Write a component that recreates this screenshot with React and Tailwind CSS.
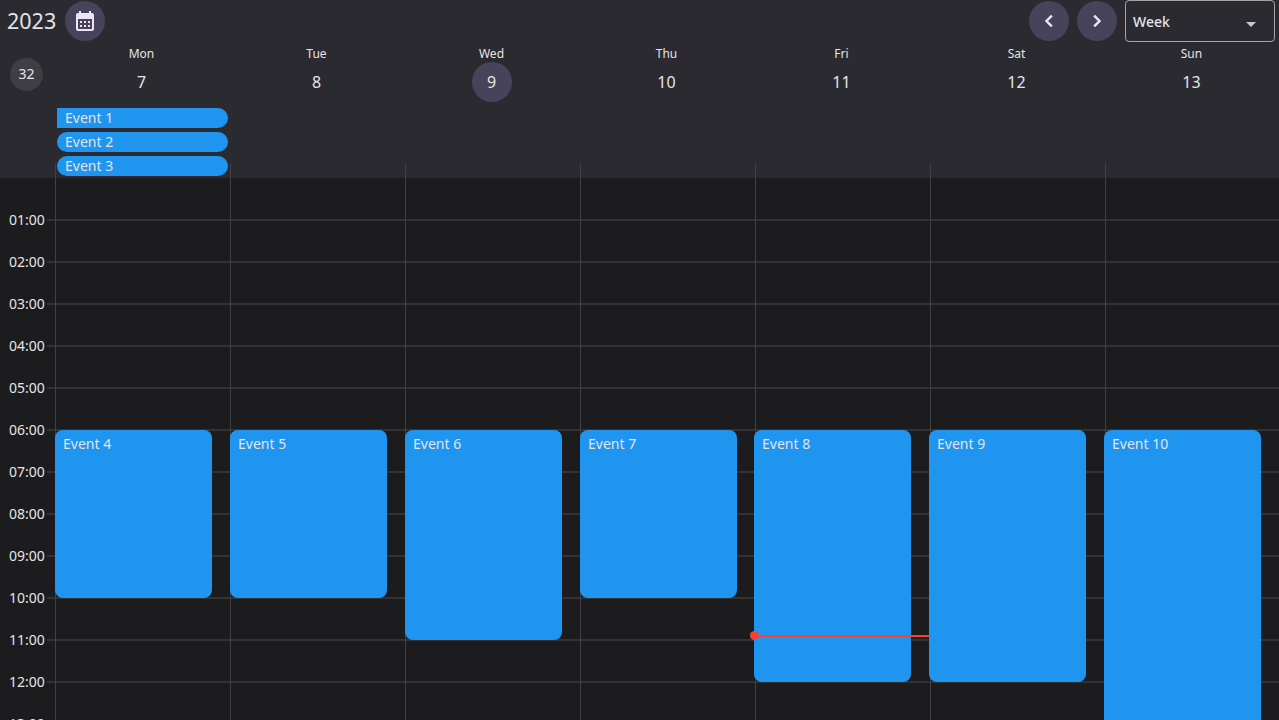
import { MdCalendarMonth, MdArrowDropDown } from "react-icons/md";

const days = [
  ["Mon", 7],
  ["Tue", 8],
  ["Wed", 9],
  ["Thu", 10],
  ["Fri", 11],
  ["Sat", 12],
  ["Sun", 13],
];

const hours = ["01:00", "02:00", "03:00", "04:00", "05:00", "06:00", "07:00", "08:00", "09:00", "10:00", "11:00", "12:00", "13:00"];

const events = [
  { name: "Event 4", h: "h-[168px]", left: "left-0" },
  { name: "Event 5", h: "h-[168px]", left: "left-0" },
  { name: "Event 6", h: "h-[210px]", left: "left-0" },
  { name: "Event 7", h: "h-[168px]", left: "left-0" },
  { name: "Event 8", h: "h-[252px]", left: "-left-px" },
  { name: "Event 9", h: "h-[252px]", left: "-left-px" },
  { name: "Event 10", h: "h-[336px]", left: "-left-px" },
];

function Chevron({ d }) {
  return (
    <svg width="24" height="24" viewBox="0 0 24 24" fill="currentColor" stroke="currentColor" strokeWidth="0.5" className="text-[#ece4f5]">
      <path d={d} />
    </svg>
  );
}

export default function App() {
  return (
    <div className="h-[720px] w-[1279px] overflow-hidden flex flex-col bg-[#1c1c1e] text-[#e4e4e7] font-['Noto_Sans',sans-serif]">
      {/* HEADER */}
      <div className="h-[178px] shrink-0 bg-[#2b2a31]">
        <div className="h-[42px] flex items-center pl-[7px] pr-1">
          <span className="w-[50px] text-[21.5px] leading-none">2023</span>
          <button className="ml-2 w-10 h-10 rounded-full bg-[#47435a] flex items-center justify-center">
            <MdCalendarMonth className="text-[#ece4f5]" size={24} />
          </button>
          <button className="ml-auto w-10 h-10 rounded-full bg-[#47435a] flex items-center justify-center">
            <Chevron d="M15.41 7.41 14 6l-6 6 6 6 1.41-1.41L10.83 12z" />
          </button>
          <button className="ml-2 w-10 h-10 rounded-full bg-[#47435a] flex items-center justify-center">
            <Chevron d="M10 6 8.59 7.41 13.17 12l-4.58 4.59L10 18l6-6z" />
          </button>
          <div className="ml-2 w-[150px] h-[42px] border border-[#a5a5a8] rounded-[4px] flex items-center justify-between pl-[7px] pr-[11px]">
            <span className="text-sm font-medium mt-px">Week</span>
            <MdArrowDropDown className="mt-1.5 text-[#c8c8cc]" size={24} />
          </div>
        </div>

        <div className="flex h-[60px]">
          <div className="w-[54px] shrink-0 flex items-center pl-2.5 pt-1">
            <span className="w-[33px] h-[33px] rounded-full bg-[#3f3e44] flex items-center justify-center text-sm">32</span>
          </div>
          <div className="flex-1 grid grid-cols-[repeat(7,175px)]">
            {days.map(([name, num]) => (
              <div key={name} className="flex flex-col items-center">
                <span className="text-xs leading-[24px]">{name}</span>
                <span
                  className={`w-10 h-10 -mt-1 rounded-full flex items-center justify-center text-base ${
                    num === 9 ? "bg-[#47435a]" : ""
                  }`}
                >
                  {num}
                </span>
              </div>
            ))}
          </div>
        </div>

        {/* ALL DAY EVENTS */}
        <div className="ml-[57px] w-[171px] mt-1.5 flex flex-col gap-1 relative z-10">
          <div className="h-5 bg-[#2095f0] rounded-r-[10px] pl-2 text-sm leading-5">Event 1</div>
          <div className="h-5 bg-[#2095f0] rounded-[10px] pl-2 text-sm leading-5">Event 2</div>
          <div className="h-5 bg-[#2095f0] rounded-[10px] pl-2 text-sm leading-5">Event 3</div>
        </div>
      </div>

      {/* GRID */}
      <div className="flex-1 relative flex">
        <div className="w-[55px] shrink-0 pt-[42px]">
          {hours.map((h) => (
            <div key={h} className="h-[42px] relative">
              <span className="absolute left-[9px] -top-[10px] text-sm leading-5">{h}</span>
              <span className="absolute left-[47px] top-0 w-2 h-0.5 -mt-px bg-[#333336]" />
            </div>
          ))}
        </div>
        <div className="flex-1 grid grid-cols-[repeat(7,175px)] relative">
          <div className="absolute inset-x-0 top-[42px]">
            {hours.map((h) => (
              <div key={h} className="h-[42px] border-t-2 -mt-px mb-px border-[#333336]" />
            ))}
          </div>
          {events.map((ev) => (
            <div key={ev.name} className="relative">
              <div className="absolute left-0 -top-[15px] bottom-0 w-px bg-[#414145]" />
              <div className={`absolute ${ev.left} top-[252px] w-[157px] ${ev.h} bg-[#2095f0] rounded-lg pl-2 pt-1 text-sm leading-5`}>
                {ev.name}
              </div>
            </div>
          ))}
          {/* NOW LINE */}
          <div className="absolute left-[700px] top-[457px] w-[175px] h-0.5 bg-[#f44336]">
            <span className="absolute -left-[5px] -top-1 w-[9px] h-[9px] rounded-full bg-[#f44336]" />
          </div>
        </div>
      </div>
    </div>
  );
}
